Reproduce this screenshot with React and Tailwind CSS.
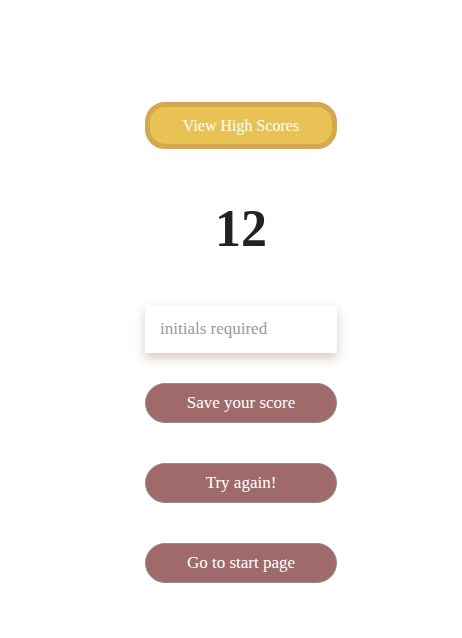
export default function App() {
  const serif = { fontFamily: '"Liberation Serif", "Times New Roman", serif' };
  return (
    <div className="flex min-h-[638px] flex-col items-center bg-white pl-[20px]" style={serif}>
      <button className="mt-[102px] h-[47px] w-[192px] rounded-[20px] border-[5px] border-[#d5a84f] bg-[#e9c255] text-[16px] text-white">
        View High Scores
      </button>
      <div className="mt-[54px] h-[52px] text-[52px] font-bold leading-none text-[#222]">12</div>
      <input
        placeholder="initials required"
        className="mt-[50px] h-[48px] w-[192px] bg-white px-[15px] text-[17px] text-[#555] placeholder:text-[#9a9a9a] shadow-[0_5px_10px_rgba(150,100,80,0.35)] outline-none"
        style={serif}
      />
      <button className="mt-[30px] h-[40px] w-[192px] rounded-full border border-[#9a8a8a] bg-[#a06a6a] text-[17px] text-white">
        Save your score
      </button>
      <button className="mt-[40px] h-[40px] w-[192px] rounded-full border border-[#9a8a8a] bg-[#a06a6a] text-[17px] text-white">
        Try again!
      </button>
      <button className="mt-[40px] h-[40px] w-[192px] rounded-full border border-[#9a8a8a] bg-[#a06a6a] text-[17px] text-white">
        Go to start page
      </button>
    </div>
  );
}
